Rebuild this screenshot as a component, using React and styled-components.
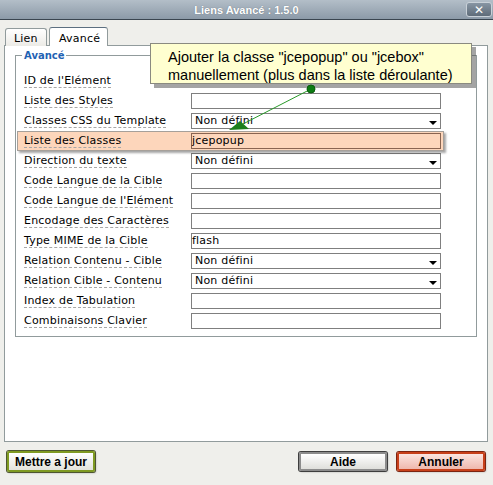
import React from 'react';
import styled, { createGlobalStyle } from 'styled-components';

const GlobalStyle = createGlobalStyle`
  html, body {
    margin: 0;
    padding: 0;
    background: #efefeb;
  }
  body {
    font-family: "DejaVu Sans", Verdana, sans-serif;
    font-size: 11px;
    color: #000;
  }
`;

const rows = [
  { label: "ID de l'Elément", type: 'none' },
  { label: 'Liste des Styles', type: 'text' },
  { label: 'Classes CSS du Template', type: 'select', value: 'Non défini' },
  { label: 'Liste des Classes', type: 'text', value: 'jcepopup', highlight: true },
  { label: 'Direction du texte', type: 'select', value: 'Non défini' },
  { label: 'Code Langue de la Cible', type: 'text' },
  { label: "Code Langue de l'Elément", type: 'text' },
  { label: 'Encodage des Caractères', type: 'text' },
  { label: 'Type MIME de la Cible', type: 'text', value: 'flash' },
  { label: 'Relation Contenu - Cible', type: 'select', value: 'Non défini' },
  { label: 'Relation Cible - Contenu', type: 'select', value: 'Non défini' },
  { label: 'Index de Tabulation', type: 'text' },
  { label: 'Combinaisons Clavier', type: 'text' },
];

const Window = styled.div`
  position: relative;
  width: 493px;
  height: 485px;
  background: #efefeb;
  overflow: hidden;
`;

const TitleBar = styled.div`
  height: 19px;
  border-bottom: 1px solid #3a4550;
  background: linear-gradient(#b3bec8, #8c9aa8);
  display: grid;
  grid-template-columns: 1fr auto 1fr;
  align-items: center;
  color: #fff;
  font: bold 11px "Liberation Sans", Arial, sans-serif;
`;

const Title = styled.div`
  grid-column: 2;
  text-shadow: 0 0 1px rgba(60, 70, 80, 0.6);
`;

const CloseButton = styled.div`
  grid-column: 3;
  justify-self: end;
  margin-right: 1px;
  width: 24px;
  height: 13px;
  border: 1px solid #c9d1d8;
  border-radius: 3px;
  background: linear-gradient(#8795a3, #5f6c79);
  display: flex;
  align-items: center;
  justify-content: center;
  font: bold 12px "DejaVu Sans", sans-serif;
  color: #fff;
`;

const Body = styled.div`
  padding: 7px 5px 0 4px;
`;

const Tabs = styled.div`
  display: flex;
  align-items: flex-end;
  gap: 2px;
  padding-left: 1px;
  height: 19px;
  margin-bottom: -1px;
`;

const Tab = styled.div`
  position: relative;
  box-sizing: border-box;
  width: ${p => (p.$active ? 59 : 42)}px;
  height: ${p => (p.$active ? 19 : 18)}px;
  padding: ${p => (p.$active ? '4px 0 0 9px' : '3px 0 0 8px')};
  border: 1px solid #919b9c;
  border-bottom: none;
  border-top-color: ${p => (p.$active ? '#5c6f80' : '#919b9c')};
  border-radius: 3px 3px 0 0;
  background: ${p => (p.$active ? '#fff' : 'linear-gradient(#fff, #ecebe6)')};
  z-index: ${p => (p.$active ? 1 : 0)};
  font-size: 11px;
  letter-spacing: 0.2px;
`;

const Panel = styled.div`
  box-sizing: border-box;
  height: 397px;
  border: 1px solid #919b9c;
  background: #fff;
  padding: 4px 10px 0 10px;
`;

const Fieldset = styled.fieldset`
  margin: 0;
  padding: 10px 0 5px 1px;
  border: 1px solid #919b9c;
  min-width: 0;
`;

const Legend = styled.legend`
  margin-left: 5px;
  padding: 0 2px;
  color: #1f62b3;
  font: bold 10px "DejaVu Sans", Verdana, sans-serif;
`;

const Row = styled.div`
  position: relative;
  display: grid;
  grid-template-columns: 167px 250px;
  align-items: center;
  width: fit-content;
  height: 20px;
  padding: 0 3px 0 7px;
  background: ${p => (p.$highlight ? '#fdd6bb' : 'transparent')};
  box-shadow: ${p =>
    p.$highlight ? 'inset 0 0 0 1px #a6a09a, 2px 2px 2px rgba(0,0,0,0.35)' : 'none'};
  z-index: ${p => (p.$highlight ? 1 : 0)};
`;

const Label = styled.span`
  justify-self: start;
  line-height: 13px;
  border-bottom: 1px dashed #a7a7a7;
  white-space: nowrap;
  letter-spacing: 0.2px;
`;

const Field = styled.div`
  position: relative;
  box-sizing: border-box;
  height: 16px;
  border: 1px solid ${p => (p.$highlight ? '#8a6450' : '#7f7f7f')};
  background: ${p => (p.$highlight ? '#fdd6bb' : '#fff')};
  padding-left: ${p => (p.$select ? 3 : 0)}px;
  line-height: 14px;
  font-size: 11px;
  letter-spacing: 0.2px;
  white-space: nowrap;

  &::after {
    content: '';
    display: ${p => (p.$select ? 'block' : 'none')};
    position: absolute;
    right: 3px;
    top: 7px;
    border-left: 4px solid transparent;
    border-right: 4px solid transparent;
    border-top: 4px solid #000;
  }
`;

const Tooltip = styled.div`
  position: absolute;
  left: 150px;
  top: 43px;
  box-sizing: border-box;
  width: 322px;
  height: 41px;
  padding: 4px 0 0 17px;
  border: 1px solid #8a8a80;
  background: #ffffd0;
  box-shadow: 4px 4px 0 rgba(90, 90, 90, 0.55);
  font: 14.5px/18px "Liberation Sans", Arial, sans-serif;
  color: #000;
  z-index: 5;
`;

const Pointer = styled.svg`
  position: absolute;
  left: 0;
  top: 0;
  pointer-events: none;
  z-index: 6;
`;

const Footer = styled.div`
  display: flex;
  align-items: center;
  gap: 8px;
  height: 23px;
  padding: 8px 7px 0 6px;
`;

const tones = {
  green: { border: '#7f9a22', outer: '#4d5631', bg: 'linear-gradient(#ffffff, #e3e3dc)' },
  grey: { border: '#8c8c8c', outer: '#3e3e3e', bg: 'linear-gradient(#ffffff, #dfdfdb)' },
  red: { border: '#c8401a', outer: '#7c2410', bg: 'linear-gradient(#fbe5e0, #efb8ad)' },
};

const Button = styled.div`
  box-sizing: border-box;
  width: 88px;
  height: ${p => (p.$tone === 'green' ? 21 : 19)}px;
  margin: 1px;
  margin-left: ${p => (p.$push ? 'auto' : '1px')};
  border: 2px solid ${p => tones[p.$tone].border};
  box-shadow: 0 0 0 1px ${p => tones[p.$tone].outer}, 1px 1px 2px rgba(0,0,0,0.3);
  border-radius: 2px;
  background: ${p => tones[p.$tone].bg};
  display: flex;
  align-items: center;
  justify-content: center;
  font: bold 12px "Liberation Sans", Arial, sans-serif;
  color: #000;
`;

const FormRow = ({ row }) => (
  <Row $highlight={row.highlight}>
    <Label>{row.label}</Label>
    {row.type !== 'none' && (
      <Field $select={row.type === 'select'} $highlight={row.highlight}>
        {row.value}
      </Field>
    )}
  </Row>
);

const App = () => (
  <Window>
    <GlobalStyle />
    <TitleBar>
      <Title>Liens Avancé : 1.5.0</Title>
      <CloseButton>✕</CloseButton>
    </TitleBar>
    <Body>
      <Tabs>
        <Tab>Lien</Tab>
        <Tab $active>Avancé</Tab>
      </Tabs>
      <Panel>
        <Fieldset>
          <Legend>Avancé</Legend>
          {rows.map(r => (
            <FormRow key={r.label} row={r} />
          ))}
        </Fieldset>
      </Panel>
    </Body>
    <Footer>
      <Button $tone="green">Mettre a jour</Button>
      <Button $tone="grey" $push>Aide</Button>
      <Button $tone="red">Annuler</Button>
    </Footer>
    <Tooltip>
      Ajouter la classe "jcepopup" ou "jcebox"
      <br />
      manuellement (plus dans la liste déroulante)
    </Tooltip>
    <Pointer width="493" height="485" viewBox="0 0 493 485">
      <line x1="311" y1="89" x2="241" y2="125" stroke="#2a9a2a" strokeWidth="1" />
      <polygon points="229,130 240,121 249,129" fill="#1c7f1c" />
      <circle cx="311" cy="89" r="4" fill="#0d7d12" stroke="#0a5c0d" strokeWidth="1" />
    </Pointer>
  </Window>
);

export default App;
